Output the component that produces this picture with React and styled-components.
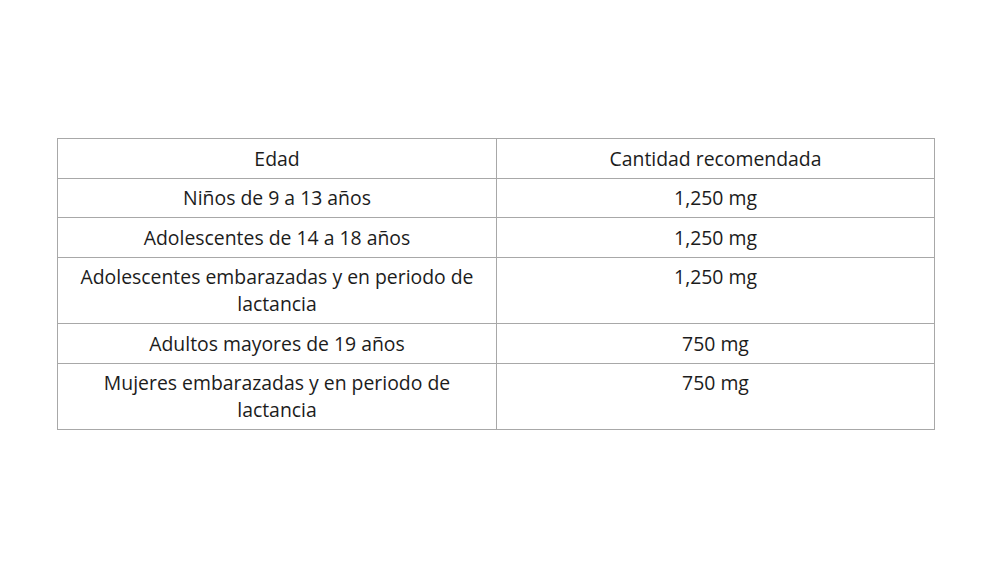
import React from "react";
import styled, { createGlobalStyle } from "styled-components";

const Global = createGlobalStyle`
  html, body { margin: 0; padding: 0; background: #ffffff; }
  body { font-family: "Open Sans", Lato, sans-serif; color: #1c1c1c; }
`;

const Page = styled.div`
  width: 1000px;
  height: 575px;
  padding: 138px 0 0 57px;
  box-sizing: border-box;
`;

const Table = styled.table`
  width: 877px;
  border-collapse: collapse;
  table-layout: fixed;
  font-size: 19.4px;
  line-height: 27px;
`;

const Col = styled.col`
  width: ${(p) => p.$w}px;
`;

const Cell = styled.td`
  border: 1px solid #a8a8a8;
  text-align: center;
  vertical-align: top;
  padding: 5.5px 12px 6px;
`;

const rows = [
  ["Edad", "Cantidad recomendada"],
  ["Niños de 9 a 13 años", "1,250 mg"],
  ["Adolescentes de 14 a 18 años", "1,250 mg"],
  ["Adolescentes embarazadas y en periodo de lactancia", "1,250 mg"],
  ["Adultos mayores de 19 años", "750 mg"],
  ["Mujeres embarazadas y en periodo de lactancia", "750 mg"],
];

export default function App() {
  return (
    <>
      <Global />
      <Page>
        <Table>
          <colgroup>
            <Col $w={439} />
            <Col $w={438} />
          </colgroup>
          <tbody>
            {rows.map((r, i) => (
              <tr key={i}>
                <Cell>{r[0]}</Cell>
                <Cell>{r[1]}</Cell>
              </tr>
            ))}
          </tbody>
        </Table>
      </Page>
    </>
  );
}
